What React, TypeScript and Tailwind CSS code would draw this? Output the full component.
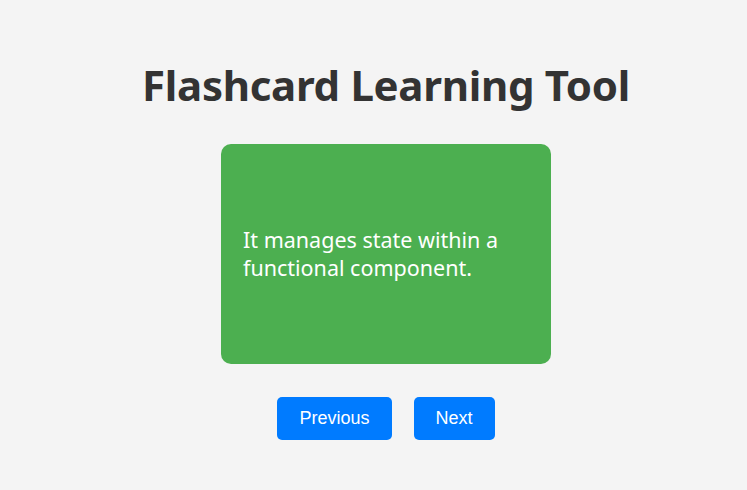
import React, { useState } from "react";

const cards = [
  { q: "What does useState do?", a: "It manages state within a functional component." },
  { q: "What is JSX?", a: "A syntax extension that looks like HTML inside JavaScript." },
];

export default function App() {
  const [index, setIndex] = useState(0);
  const [flipped, setFlipped] = useState(true);
  const card = cards[index];

  return (
    <div className="min-h-[490px] bg-[#f4f4f4] pl-[25px] pt-[58px] flex flex-col items-center">
      <h1 className="text-[42px] font-bold leading-[54px] text-[#333] font-['Noto_Sans',sans-serif] tracking-[-0.3px]">
        Flashcard Learning Tool
      </h1>
      <div
        onClick={() => setFlipped(!flipped)}
        className="mt-[32px] w-[330px] h-[220px] rounded-[10px] bg-[#4caf50] px-[22px] flex items-center cursor-pointer"
      >
        <p className="text-[21.5px] leading-[28px] text-white font-['Noto_Sans',sans-serif]">
          {flipped ? card.a : card.q}
        </p>
      </div>
      <div className="mt-[33px] flex gap-[22px] font-['Liberation_Sans',sans-serif]">
        <button
          onClick={() => { setIndex((index + cards.length - 1) % cards.length); setFlipped(false); }}
          className="h-[43px] px-[22px] rounded-[5px] bg-[#007bff] text-white text-[18px]"
        >
          Previous
        </button>
        <button
          onClick={() => { setIndex((index + 1) % cards.length); setFlipped(false); }}
          className="h-[43px] px-[22px] rounded-[5px] bg-[#007bff] text-white text-[18px]"
        >
          Next
        </button>
      </div>
    </div>
  );
}
